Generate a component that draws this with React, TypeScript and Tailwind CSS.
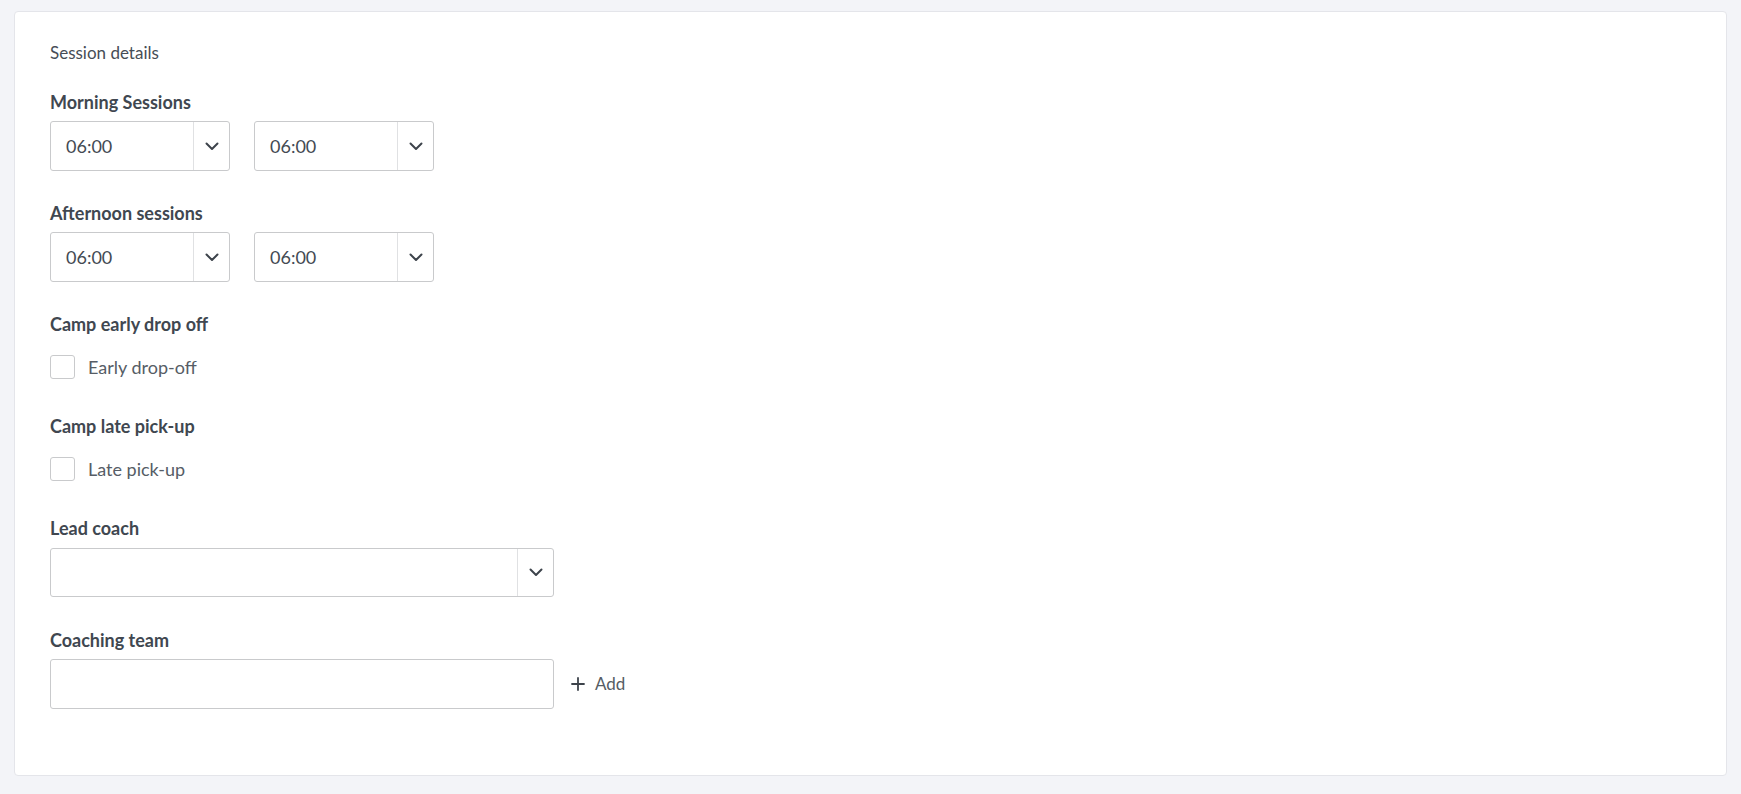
import React from 'react';

const ChevronDown = () => (
  <svg width="14" height="9" viewBox="0 0 14 9" fill="none">
    <path d="M1.5 1.5L7 7L12.5 1.5" stroke="#3d434b" strokeWidth="2" strokeLinecap="round" strokeLinejoin="round" />
  </svg>
);

const TimeSelect = ({ value }: { value: string }) => (
  <div className="flex h-[50px] w-[180px] items-stretch rounded-[3px] border border-[#c9cacc] bg-white">
    <div className="flex flex-1 items-center pl-[15px] text-[18px] text-[#434a53]">{value}</div>
    <div className="flex w-[36px] items-center justify-center border-l border-[#e0e1e3]">
      <ChevronDown />
    </div>
  </div>
);

const Label = ({ children, className = '' }: { children: React.ReactNode; className?: string }) => (
  <div className={`text-[18px] font-bold leading-6 text-[#404750] ${className}`}>{children}</div>
);

const Checkbox = ({ label }: { label: string }) => (
  <label className="flex items-center gap-[13px]">
    <span className="block h-[24px] w-[25px] rounded-[3px] border border-[#c9cacc] bg-white" />
    <span className="text-[18px] leading-6 text-[#565d66]">{label}</span>
  </label>
);

export default function App() {
  return (
    <div className="min-h-screen bg-[#f3f4f8] px-[14px] pt-[11px] pb-[18px]" style={{ fontFamily: 'Lato, "Open Sans", sans-serif' }}>
      <div className="h-[765px] rounded-[4px] border border-[#e4e5ea] bg-white pl-[35px] pt-[29px]">
        <div className="text-[17px] leading-6 text-[#464d56]">Session details</div>

        <Label className="mt-[25px]">Morning Sessions</Label>
        <div className="mt-[7px] flex gap-[24px]">
          <TimeSelect value="06:00" />
          <TimeSelect value="06:00" />
        </div>

        <Label className="mt-[30px]">Afternoon sessions</Label>
        <div className="mt-[7px] flex gap-[24px]">
          <TimeSelect value="06:00" />
          <TimeSelect value="06:00" />
        </div>

        <Label className="mt-[30px]">Camp early drop off</Label>
        <div className="mt-[19px]">
          <Checkbox label="Early drop-off" />
        </div>

        <Label className="mt-[35px]">Camp late pick-up</Label>
        <div className="mt-[19px]">
          <Checkbox label="Late pick-up" />
        </div>

        <Label className="mt-[35px]">Lead coach</Label>
        <div className="mt-[8px] flex h-[49px] w-[504px] items-stretch rounded-[3px] border border-[#c9cacc] bg-white">
          <div className="flex-1" />
          <div className="flex w-[36px] items-center justify-center border-l border-[#e0e1e3]">
            <ChevronDown />
          </div>
        </div>

        <Label className="mt-[31px]">Coaching team</Label>
        <div className="mt-[7px] flex items-center gap-[17px]">
          <div className="h-[50px] w-[504px] rounded-[3px] border border-[#c9cacc] bg-white" />
          <button className="flex items-center gap-[10px] text-[17px] text-[#555c64]">
            <svg width="14" height="14" viewBox="0 0 14 14" fill="none">
              <path d="M7 1V13M1 7H13" stroke="#3d434b" strokeWidth="1.8" strokeLinecap="round" />
            </svg>
            Add
          </button>
        </div>
      </div>
    </div>
  );
}
